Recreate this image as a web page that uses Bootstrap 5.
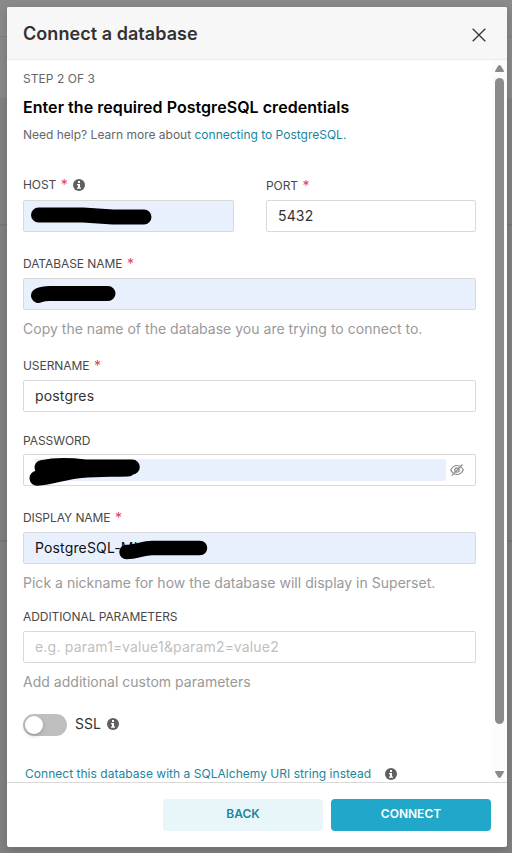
<!DOCTYPE html>
<html lang="en">
<head>
<meta charset="utf-8">
<meta name="viewport" content="width=device-width, initial-scale=1">
<title>Connect a database</title>
<link href="https://cdn.jsdelivr.net/npm/bootstrap@5.3.0/dist/css/bootstrap.min.css" rel="stylesheet">
<style>
html, body { height: 853px; overflow: hidden; }
body { font-family: Inter, "Liberation Sans", sans-serif; font-size: 14px; color: #323232; background: linear-gradient(#8a8a8a 0 36px, #818181 36px 37px, #898989 37px 98px, #818181 98px 224px, #777 224px 226px, #808080 226px 540px, #767676 540px 542px, #808080 542px); }
.dialog-box { width: 500px; height: 840px; margin: 7px 0 0 7px; border-radius: 2px; box-shadow: 0 3px 10px rgba(0,0,0,.16); }
.dialog-head { height: 53px; background: #f7f7f7; border-bottom: 1px solid #ebebeb; padding: 0 21px 0 16px; }
.dialog-title { font-size: 18px; font-weight: 600; line-height: 24px; letter-spacing: .05px; padding-top: 2px; }
.dialog-main { height: 722px; }
.form-pane { width: 485px; padding: 9px 16px 0; }
.step { font-size: 12px; line-height: 20px; letter-spacing: .05px; color: #666; }
.lead-title { font-size: 16px; font-weight: 600; line-height: 24px; margin: 6px 0; color: #000; letter-spacing: .05px; }
.need { font-size: 12px; line-height: 20px; color: #666; }
.teal { color: #1a85a0; text-decoration: none; }
.cap { font-size: 12px; line-height: 16px; height: 16px; color: #484848; white-space: nowrap; letter-spacing: -.07px; }
.cap b { font-weight: 400; font-size: 14px; color: #e04355; margin-left: 4.5px; }
.form-control { height: 32px; font-size: 14px; line-height: 30px; padding: 0 11px 1px; border: 1px solid #d9d9d9; border-radius: 2px; color: #323232; letter-spacing: .15px; }
.form-control::placeholder { color: #bfbfbf; letter-spacing: .2px; }
.filled, .filled:focus { background: #e8f0fe; color: #111; }
.hint { font-size: 14px; line-height: 20px; height: 20px; color: #999; white-space: nowrap; letter-spacing: .02px; }
.pass-box { padding-bottom: 0; }
.pass-fill { width: 411px; height: 22px; background: #e8f0fe; border-radius: 0 2px 2px 0; }
.redact { position: absolute; left: 0; top: 0; overflow: visible; pointer-events: none; }
.toggle-track { width: 44px; height: 22px; border-radius: 11px; background: #bfbfbf; padding: 2px; }
.toggle-knob { width: 18px; height: 18px; border-radius: 50%; background: #fff; box-shadow: 0 2px 4px rgba(0,35,11,.2); }
.uri { font-size: 12px; line-height: 16px; letter-spacing: .03px; padding-left: 2px; }
.bar-track { width: 15px; background: #fcfcfc; padding: 5px 3px 4px; }
.bar-thumb { width: 9px; height: 646px; border-radius: 5px; background: #8b8b8b; margin-bottom: 41px; }
.dialog-foot { height: 65px; border-top: 1px solid #d9d9d9; padding: 16px; }
.btn-act { width: 160px; height: 32px; border: 0; border-radius: 4px; padding: 0 0 2px; font-size: 12px; font-weight: 600; line-height: 30px; }
.btn-soft, .btn-soft:hover { background: #e9f6f9; color: #1a85a0; }
.btn-main, .btn-main:hover { background: #20a7c9; color: #fff; }
.f-row1 { gap: 32px; margin-top: 32px; }
.host-col { width: 211px; }
.port-col { width: 210px; }
.host-col .cap { margin-bottom: 7px; }
.cap-port { margin: 1px 0 6px; }
.i-host { margin-left: 5.5px; }
.g-db { margin: 24px 0 6px; }
.g-hint { margin-top: 9px; }
.g-user { margin: 19px 0 6px; }
.g-pass { margin: 21px 0 5px; }
.g-disp { margin: 24px 0 6px; }
.g-add { margin: 16px 0 6px; }
.g-ssl { height: 22px; margin: 22px 0 30px; }
.g-ssl svg { margin-bottom: 2px; }
.ssl-text { line-height: 20px; margin: 0 6px 2px 8px; }
.i-eye { margin-left: 4px; flex: none; }
.i-uri { margin-left: 14px; }
</style>
<script src="https://cdn.jsdelivr.net/npm/bootstrap@5.3.0/dist/js/bootstrap.bundle.min.js"></script>
</head>
<body>
<svg class="d-none"><symbol id="info" viewBox="0 0 12 12"><circle cx="6" cy="6" r="6" fill="#606060"/><path d="M5 2h2v2H5zM4 5h3v3.500h1v1.200H4V8.500h1V6.200H4z" fill="#fff"/></symbol></svg>
<main class="dialog-box bg-white d-flex flex-column overflow-hidden">
  <header class="dialog-head d-flex align-items-center justify-content-between">
    <h1 class="dialog-title mb-0">Connect a database</h1>
    <svg width="14" height="14" class="mt-1" viewBox="0 0 14 14" fill="none" stroke="#333" stroke-width="1.3"><path d="M.7.7l12.6 12.6M13.3.7L.7 13.3"/></svg>
  </header>
  <section class="dialog-main d-flex overflow-hidden">
    <form class="form-pane">
      <div class="step">STEP 2 OF 3</div>
      <h2 class="lead-title">Enter the required PostgreSQL credentials</h2>
      <div class="need">Need help? Learn more about <a href="#" class="teal">connecting to PostgreSQL.</a></div>
      <div class="d-flex f-row1">
        <div class="host-col">
          <div class="cap d-flex align-items-center">HOST <b>*</b><svg width="12" height="12" class="i-host"><use href="#info"/></svg></div>
          <div class="position-relative"><input class="form-control filled" aria-label="Host">
            <svg class="redact" width="211" height="32"><path d="M15.500 15H60L90 17H121" fill="none" stroke="#000" stroke-width="15" stroke-linecap="round" stroke-linejoin="round"/></svg></div>
        </div>
        <div class="port-col">
          <div class="cap cap-port d-flex align-items-center">PORT <b>*</b></div>
          <input class="form-control" value="5432" aria-label="Port">
        </div>
      </div>
      <div class="cap d-flex align-items-center g-db">DATABASE NAME <b>*</b></div>
      <div class="position-relative"><input class="form-control filled" aria-label="Database name">
        <svg class="redact" width="453" height="32"><path d="M15.500 17.500Q20 15.500 27 15.500H85" fill="none" stroke="#000" stroke-width="15" stroke-linecap="round"/></svg></div>
      <div class="hint g-hint">Copy the name of the database you are trying to connect to.</div>
      <div class="cap d-flex align-items-center g-user">USERNAME <b>*</b></div>
      <input class="form-control" value="postgres" aria-label="Username">
      <div class="cap d-flex align-items-center g-pass">PASSWORD</div>
      <div class="form-control pass-box position-relative d-flex align-items-center">
        <div class="pass-fill"></div>
        <svg class="i-eye" width="14" height="12" viewBox="0 0 14 12" fill="none" stroke="#8c8c8c" stroke-width="1.2"><path d="M.7 6Q3 1.500 7 1.500T13.300 6Q11 10.500 7 10.500T.7 6zM1.800 11.600L12.400.5"/><circle cx="7" cy="6" r="2.200"/></svg>
        <svg class="redact" width="451" height="30"><path d="M13 23.200C29 22 40 17 57 15.500S80 14.500 104 14" fill="none" stroke="#000" stroke-width="15" stroke-linecap="round"/><path d="M18 12.500Q36 9 61 12H108.300" fill="none" stroke="#000" stroke-width="15" stroke-linecap="round"/></svg>
      </div>
      <div class="cap d-flex align-items-center g-disp">DISPLAY NAME <b>*</b></div>
      <div class="position-relative"><input class="form-control filled" value="PostgreSQL-MI" aria-label="Display name">
        <svg class="redact" width="453" height="32"><path d="M103.500 20C113 20 120 16 129 16H177" fill="none" stroke="#000" stroke-width="14.500" stroke-linecap="round"/></svg></div>
      <div class="hint g-hint">Pick a nickname for how the database will display in Superset.</div>
      <div class="cap d-flex align-items-center g-add">ADDITIONAL PARAMETERS</div>
      <input class="form-control" placeholder="e.g. param1=value1&amp;param2=value2" aria-label="Additional parameters">
      <div class="hint g-hint">Add additional custom parameters</div>
      <div class="d-flex align-items-center g-ssl">
        <div class="toggle-track"><div class="toggle-knob"></div></div>
        <span class="ssl-text">SSL</span><svg width="12" height="12"><use href="#info"/></svg>
      </div>
      <div class="uri d-flex align-items-center"><a href="#" class="teal">Connect this database with a SQLAlchemy URI string instead</a><svg class="i-uri" width="12" height="12"><use href="#info"/></svg></div>
    </form>
    <div class="bar-track d-flex flex-column align-items-center justify-content-between">
      <svg width="9" height="7"><path d="M4.500 0Q5.300 0 6 1L9 6Q9 7 8.200 7H.8Q0 7 0 6L3 1Q3.700 0 4.500 0z" fill="#8b8b8b"/></svg>
      <div class="bar-thumb"></div>
      <svg width="9" height="7"><path d="M4.500 7Q5.300 7 6 6L9 1Q9 0 8.200 0H.8Q0 0 0 1L3 6Q3.700 7 4.500 7z" fill="#8b8b8b"/></svg>
    </div>
  </section>
  <footer class="dialog-foot d-flex justify-content-end gap-2">
    <button class="btn btn-act btn-soft">BACK</button>
    <button class="btn btn-act btn-main">CONNECT</button>
  </footer>
</main>
</body>
</html>
